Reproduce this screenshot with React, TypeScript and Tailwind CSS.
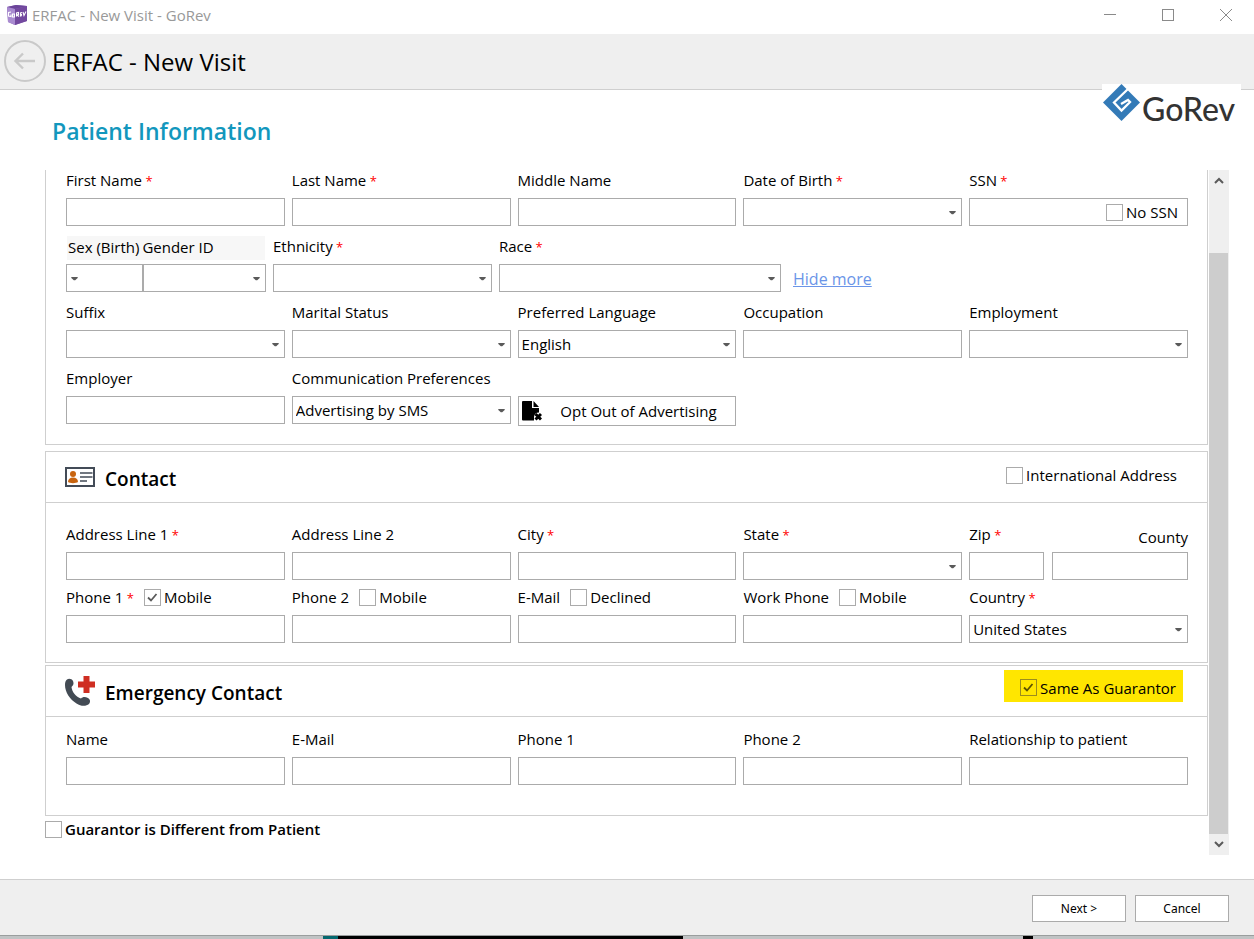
import React, { useState } from "react";
import clsx from "clsx";

type FieldProps = {
  id: string;
  label: string;
  required?: boolean;
  extra?: React.ReactNode;
  children?: React.ReactNode;
};

const controlStyle = "block h-7 w-full min-w-0 rounded-none border border-[#ababab] bg-white px-[3px] outline-none focus:border-[#1297bd]";

function Field({ id, label, required, extra, children }: FieldProps) {
  return (
    <div className="min-w-0">
      <div className="mb-2 flex h-5 items-center gap-2.5 whitespace-nowrap">
        <label htmlFor={id}>
          {label}
          {required && <span className="text-[13px] text-[#ff0000]"> *</span>}
        </label>
        {extra}
      </div>
      {children ? children : <input id={id} type="text" className={controlStyle} />}
    </div>
  );
}

function Select({ id, options, arrowLeft, className }: { id: string; options?: string[]; arrowLeft?: boolean; className?: string }) {
  return (
    <div className={clsx("relative", className)}>
      <select id={id} className={clsx(controlStyle, "appearance-none")}>
        {(options || [""]).map((x) => (
          <option key={x}>{x}</option>
        ))}
      </select>
      <svg
        viewBox="0 0 7 4"
        className={clsx("pointer-events-none absolute top-[13px] h-1 w-[7px]", arrowLeft ? "left-[5px]" : "right-1.5")}
      >
        <path d="M.3 0H6.700V1L4.200 3.300H2.800L.3 1Z" fill="#5a5a5a" />
      </svg>
    </div>
  );
}

function Checkbox({ id, label, checked = false, tinted, bold }: { id: string; label: string; checked?: boolean; tinted?: boolean; bold?: boolean }) {
  const [value, setValue] = useState(checked);

  return (
    <span className="flex items-center gap-[3px] whitespace-nowrap">
      <span className="grid h-[17px] w-[17px] shrink-0">
        <input
          id={id}
          type="checkbox"
          checked={value}
          onChange={() => setValue(!value)}
          className={clsx("col-start-1 row-start-1 h-[17px] w-[17px] appearance-none border", tinted ? "border-[#9c8d1c] bg-[#ffe600]" : "border-[#ababab] bg-white")}
        />
        {value && (
          <svg viewBox="0 0 17 17" className="pointer-events-none col-start-1 row-start-1 h-[17px] w-[17px]">
            <path d="M4 8.500L7 11.500L12.500 5" fill="none" stroke={tinted ? "#5d5400" : "#5a5a5a"} strokeWidth="1.800" />
          </svg>
        )}
      </span>
      <label htmlFor={id} className={bold ? "font-semibold" : ""}>{label}</label>
    </span>
  );
}

function AppIcon() {
  return (
    <svg viewBox="0 0 20 20" className="h-5 w-5">
      <path d="M0 2L9 0L20 1V16L8 20L1 17Z" fill="#8a66b8" />
      <path d="M0 2L9 0L20 1L8 4Z" fill="#6b4499" />
      <path d="M8 4L20 1V16L8 20Z" fill="#73499f" />
      <path d="M0 2L8 4V20L1 17Z" fill="#a98bd0" />
      <path d="M4 7L1.500 7.500V11L4 11.500V9.500M5.500 9H7.500V12H5.500ZM9.500 11.500V8L11.500 7.500V9.500L10 10L12 11.500M15 7.500L13.500 8V11L15 10.500M13.500 9.500H15M16 7L17 10.500L19 6.500" fill="none" stroke="#fff" strokeWidth="1.100" />
    </svg>
  );
}

function Logo() {
  return (
    <div className="absolute right-[13px] top-[84px] flex h-[42px] w-[139px] items-start bg-white pl-px">
      <svg viewBox="0 0 37 37" className="h-[37px] w-[37px] shrink-0">
        <path d="M18.500 0L37 18.500L18.500 37L0 18.500Z" fill="#337ab7" />
        <path d="M25.500 4.500L11 18.500L18.500 26.500L27 18L25 16L18 20" fill="none" stroke="#fff" strokeWidth="2.300" />
      </svg>
      <span className="ml-[2px] mt-[6px] font-[Lato] text-[32px] font-medium leading-[38px] text-[#333]">GoRev</span>
    </div>
  );
}

function ContactIcon() {
  return (
    <svg viewBox="0 0 30 20" className="h-5 w-[30px]">
      <rect x="1" y="1" width="28" height="18" fill="#fff" stroke="#434b57" strokeWidth="2" />
      <circle cx="8" cy="7" r="3" fill="#c8640f" />
      <path d="M3 15C3 12 5 10.500 8 10.500S13 12 13 15C11 16.500 5 16.500 3 15Z" fill="#c8640f" />
      <path d="M15 6H27.500M15 10H27.500M15 14H22" stroke="#434b57" strokeWidth="1.600" />
    </svg>
  );
}

function EmergencyIcon() {
  return (
    <svg viewBox="0 0 30 30" className="h-[30px] w-[30px]">
      <path d="M2 3.500C4 2 7 3 8 5C9 7.500 8.500 9 6.500 11C7 16 11 21 16 22.500C18 20.500 20 20.500 23 22C25.500 23.500 25.500 26 24 28C21 30.500 16 30.500 11.500 27.500C5 23.500 0 16 0 9C0 6.500 .5 4.500 2 3.500Z" fill="#434b54" />
      <path d="M18.500 0H24.500V5.500H30V11.500H24.500V17H18.500V11.500H13V5.500H18.500Z" fill="#cf2e22" />
    </svg>
  );
}

function OptOutIcon() {
  return (
    <svg viewBox="0 0 20 20" className="h-5 w-5 shrink-0">
      <path d="M1 0H10V7H17V11.500C14 11.500 12 13.500 12 16V19.500H1Q0 19.500 0 18.500V1Q0 0 1 0Z" fill="#000" />
      <path d="M11.500 0L17 6H11.500Z" fill="#000" />
      <path d="M13.500 13L19 18.500M19 13L13.500 18.500" stroke="#000" strokeWidth="3" />
    </svg>
  );
}

function SectionHeader({ icon, title, children }: { icon: React.ReactNode; title: string; children: React.ReactNode }) {
  return (
    <div className="flex h-[51px] items-center border-b border-[#cfcfcf] pl-[19px]">
      {icon}
      <h2 className="ml-2.5 mt-1 text-[19px] font-semibold">{title}</h2>
      <div className="mb-1 ml-auto">{children}</div>
    </div>
  );
}

const rowStyle = "grid grid-cols-5 gap-x-[7px]";

export default function App() {
  return (
    <div className="flex min-h-screen flex-col bg-white font-['Open_Sans',sans-serif] text-[15px] leading-[22px] text-black">
      <div className="relative">
        <div className="flex h-[34px] items-center pb-1 pl-[7px] pr-[22px]">
          <AppIcon />
          <span className="ml-[5px] text-[#999]">ERFAC - New Visit - GoRev</span>
          <div className="ml-auto flex items-center gap-[46px]">
            <button aria-label="Minimize">
              <svg viewBox="0 0 12 12" className="h-3 w-3"><path d="M0 5.500H12" stroke="#8a8a8a" /></svg>
            </button>
            <button aria-label="Maximize">
              <svg viewBox="0 0 12 12" className="h-3 w-3"><rect x=".5" y=".5" width="11" height="11" fill="none" stroke="#8a8a8a" /></svg>
            </button>
            <button aria-label="Close">
              <svg viewBox="0 0 12 12" className="h-3 w-3"><path d="M0 0L12 12M12 0L0 12" stroke="#8a8a8a" /></svg>
            </button>
          </div>
        </div>
        <header className="flex h-14 items-center border-b border-[#cfcfcf] bg-[#efefef] pb-px pl-1">
          <button aria-label="Back">
            <svg viewBox="0 0 42 42" className="h-[42px] w-[42px]" fill="none" stroke="#c9c9c9" strokeWidth="2">
              <circle cx="21" cy="21" r="20" />
              <path d="M31 21H12M19 13.500L11.500 21L19 28.500" strokeWidth="2.400" />
            </svg>
          </button>
          <h1 className="ml-1.5 pt-0.5 text-2xl">ERFAC - New Visit</h1>
        </header>
        <Logo />
      </div>

      <main className="flex-1 pb-6 pl-[45px] pr-[25px]">
        <h2 className="ml-[7px] flex h-20 items-center pt-0.5 text-[23px] font-semibold text-[#1297bd]">Patient Information</h2>

        <div className="flex gap-px">
          <div className="min-w-0 flex-1">
            <section className="flex flex-col gap-2.5 border border-t-0 border-[#cfcfcf] pb-5 pl-5 pr-[19px]">
              <div className={rowStyle}>
                <Field id="firstName" label="First Name" required />
                <Field id="lastName" label="Last Name" required />
                <Field id="middleName" label="Middle Name" />
                <Field id="birthDate" label="Date of Birth" required>
                  <Select id="birthDate" />
                </Field>
                <Field id="ssn" label="SSN" required>
                  <div className="flex h-7 items-center border border-[#ababab] pr-[9px]">
                    <input id="ssn" type="text" className="h-full min-w-0 flex-1 px-[3px] outline-none" />
                    <Checkbox id="noSsn" label="No SSN" />
                  </div>
                </Field>
              </div>

              <div className="flex gap-[7px]">
                <div className="w-[200px]">
                  <div className="mx-px mb-1 flex h-6 items-center gap-[3px] whitespace-nowrap bg-[#f7f7f7] pb-0.5 pl-px">
                    <label htmlFor="sex">Sex (Birth)</label>
                    <label htmlFor="gender">Gender ID</label>
                  </div>
                  <div className="flex">
                    <Select id="sex" arrowLeft className="w-[77px]" />
                    <Select id="gender" className="flex-1" />
                  </div>
                </div>
                <div className="w-[219px]">
                  <Field id="ethnicity" label="Ethnicity" required>
                    <Select id="ethnicity" />
                  </Field>
                </div>
                <div className="w-[282px]">
                  <Field id="race" label="Race" required>
                    <Select id="race" />
                  </Field>
                </div>
                <a href="#more" className="ml-[5px] self-end pb-px text-base text-[#6b95e8] underline">Hide more</a>
              </div>

              <div className={rowStyle}>
                <Field id="suffix" label="Suffix">
                  <Select id="suffix" />
                </Field>
                <Field id="marital" label="Marital Status">
                  <Select id="marital" />
                </Field>
                <Field id="language" label="Preferred Language">
                  <Select id="language" options={["English"]} />
                </Field>
                <Field id="occupation" label="Occupation" />
                <Field id="employment" label="Employment">
                  <Select id="employment" />
                </Field>
              </div>

              <div className={rowStyle}>
                <Field id="employer" label="Employer" />
                <Field id="communication" label="Communication Preferences">
                  <Select id="communication" options={["Advertising by SMS"]} />
                </Field>
                <button className="-mb-0.5 flex h-[30px] items-center self-end border border-[#ababab] bg-white pl-[3px]">
                  <OptOutIcon />
                  <span className="flex-1 whitespace-nowrap text-center">Opt Out of Advertising</span>
                </button>
              </div>
            </section>

            <section className="mt-1.5 border border-[#cfcfcf]">
              <SectionHeader icon={<ContactIcon />} title="Contact">
                <div className="pr-[30px]">
                  <Checkbox id="international" label="International Address" />
                </div>
              </SectionHeader>
              <div className="flex flex-col gap-[7px] pb-[19px] pl-5 pr-[19px] pt-[21px]">
                <div className={rowStyle}>
                  <Field id="address1" label="Address Line 1" required />
                  <Field id="address2" label="Address Line 2" />
                  <Field id="city" label="City" required />
                  <Field id="state" label="State" required>
                    <Select id="state" />
                  </Field>
                  <div className="grid grid-cols-[75px_1fr] gap-x-2">
                    <Field id="zip" label="Zip" required />
                    <div>
                      <label htmlFor="county" className="mb-1 block pt-0.5 text-right">County</label>
                      <input id="county" type="text" className={controlStyle} />
                    </div>
                  </div>
                </div>
                <div className={rowStyle}>
                  <Field id="phone1" label="Phone 1" required extra={<Checkbox id="mobile1" label="Mobile" checked />} />
                  <Field id="phone2" label="Phone 2" extra={<Checkbox id="mobile2" label="Mobile" />} />
                  <Field id="email" label="E-Mail" extra={<Checkbox id="declined" label="Declined" />} />
                  <Field id="workPhone" label="Work Phone" extra={<Checkbox id="mobile3" label="Mobile" />} />
                  <Field id="country" label="Country" required>
                    <Select id="country" options={["United States"]} />
                  </Field>
                </div>
              </div>
            </section>

            <section className="mt-0.5 border border-[#cfcfcf]">
              <SectionHeader icon={<EmergencyIcon />} title="Emergency Contact">
                <div className="mb-[7px] mr-6 flex h-8 items-center bg-[#ffe600] pl-4 pr-[7px] pt-1">
                  <Checkbox id="sameAsGuarantor" label="Same As Guarantor" checked tinted />
                </div>
              </SectionHeader>
              <div className="pb-[30px] pl-5 pr-[19px] pt-3">
                <div className={rowStyle}>
                  <Field id="emName" label="Name" />
                  <Field id="emEmail" label="E-Mail" />
                  <Field id="emPhone1" label="Phone 1" />
                  <Field id="emPhone2" label="Phone 2" />
                  <Field id="emRelationship" label="Relationship to patient" />
                </div>
              </div>
            </section>

            <div className="mt-0.5">
              <Checkbox id="guarantorDifferent" label="Guarantor is Different from Patient" bold />
            </div>
          </div>

          <div className="flex h-[685px] w-5 flex-col bg-[#efefef]">
            <button aria-label="Scroll up" className="flex h-[21px] items-center justify-center">
              <svg viewBox="0 0 10 7" className="h-[7px] w-2.5"><path d="M1 6L5 2L9 6" fill="none" stroke="#5a5a5a" strokeWidth="2" /></svg>
            </button>
            <div className="mr-px mt-[62px] flex-1 bg-[#cdcdcd]"></div>
            <button aria-label="Scroll down" className="flex h-[21px] items-center justify-center">
              <svg viewBox="0 0 10 7" className="h-[7px] w-2.5"><path d="M1 1L5 5L9 1" fill="none" stroke="#5a5a5a" strokeWidth="2" /></svg>
            </button>
          </div>
        </div>
      </main>

      <footer className="flex h-14 items-center justify-end gap-[9px] border-t border-[#cfcfcf] bg-[#efefef] pr-[25px] pt-0.5 font-['Noto_Sans',sans-serif] text-xs">
        <button className="h-[27px] w-[94px] border border-[#ababab] bg-white">Next &gt;</button>
        <button className="h-[27px] w-[94px] border border-[#ababab] bg-white">Cancel</button>
      </footer>
      <div className="flex h-1 border-t border-[#9a9e9e] bg-[#c0c3c4]">
        <div className="ml-[323px] w-[15px] bg-[#05686f]"></div>
        <div className="w-[345px] bg-black"></div>
        <div className="ml-[340px] w-2.5 bg-black"></div>
      </div>
    </div>
  );
}
